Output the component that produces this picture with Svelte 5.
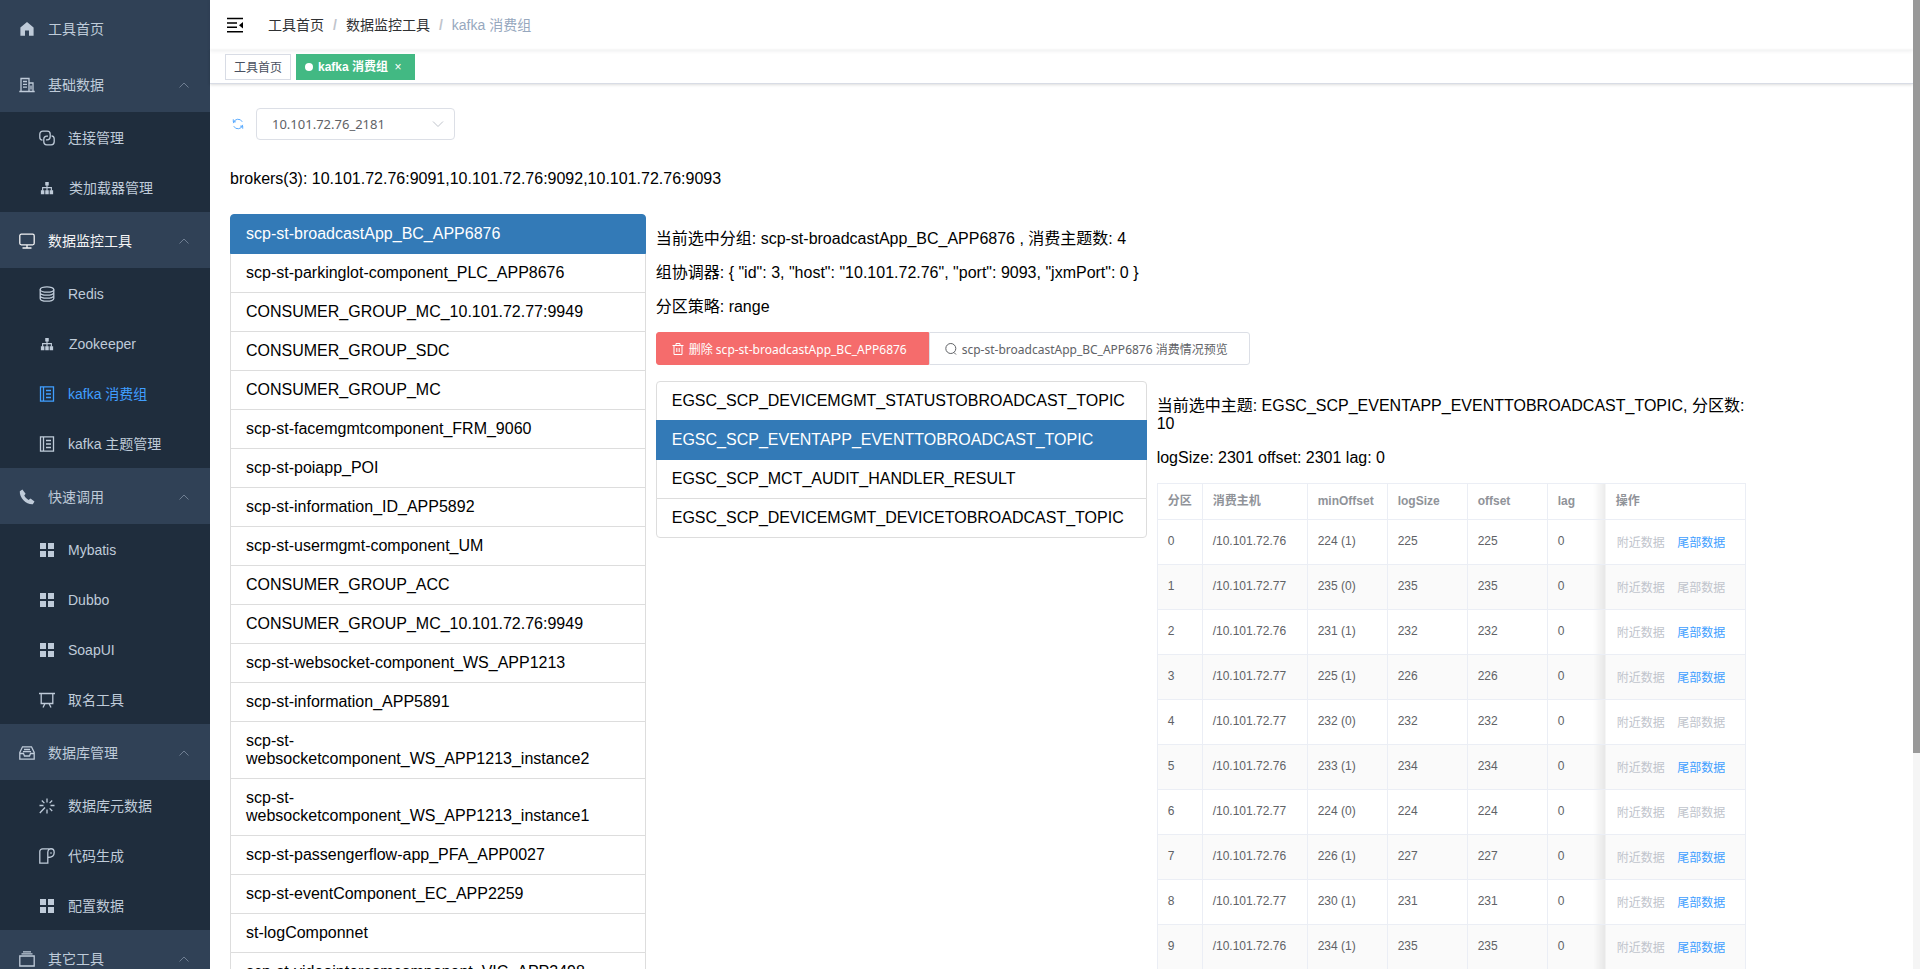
<script lang="ts">
	const menu = [
		{ title: '工具首页', icon: 'home' },
		{
			title: '基础数据',
			icon: 'office',
			children: [
				{ title: '连接管理', icon: 'link' },
				{ title: '类加载器管理', icon: 'tree', wide: true }
			]
		},
		{
			title: '数据监控工具',
			icon: 'monitor',
			open: true,
			children: [
				{ title: 'Redis', icon: 'coin' },
				{ title: 'Zookeeper', icon: 'tree', wide: true },
				{ title: 'kafka 消费组', icon: 'notebook', active: true },
				{ title: 'kafka 主题管理', icon: 'notebook' }
			]
		},
		{
			title: '快速调用',
			icon: 'phone',
			children: [
				{ title: 'Mybatis', icon: 'grid' },
				{ title: 'Dubbo', icon: 'grid' },
				{ title: 'SoapUI', icon: 'grid' },
				{ title: '取名工具', icon: 'board' }
			]
		},
		{
			title: '数据库管理',
			icon: 'inbox',
			children: [
				{ title: '数据库元数据', icon: 'magic' },
				{ title: '代码生成', icon: 'paper' },
				{ title: '配置数据', icon: 'grid' }
			]
		},
		{ title: '其它工具', icon: 'box', children: [] }
	];

	const groups = [
		'scp-st-broadcastApp_BC_APP6876',
		'scp-st-parkinglot-component_PLC_APP8676',
		'CONSUMER_GROUP_MC_10.101.72.77:9949',
		'CONSUMER_GROUP_SDC',
		'CONSUMER_GROUP_MC',
		'scp-st-facemgmtcomponent_FRM_9060',
		'scp-st-poiapp_POI',
		'scp-st-information_ID_APP5892',
		'scp-st-usermgmt-component_UM',
		'CONSUMER_GROUP_ACC',
		'CONSUMER_GROUP_MC_10.101.72.76:9949',
		'scp-st-websocket-component_WS_APP1213',
		'scp-st-information_APP5891',
		'scp-st-websocketcomponent_WS_APP1213_instance2',
		'scp-st-websocketcomponent_WS_APP1213_instance1',
		'scp-st-passengerflow-app_PFA_APP0027',
		'scp-st-eventComponent_EC_APP2259',
		'st-logComponnet',
		'scp-st-videointercomcomponent_VIC_APP3498'
	];

	const topics = [
		'EGSC_SCP_DEVICEMGMT_STATUSTOBROADCAST_TOPIC',
		'EGSC_SCP_EVENTAPP_EVENTTOBROADCAST_TOPIC',
		'EGSC_SCP_MCT_AUDIT_HANDLER_RESULT',
		'EGSC_SCP_DEVICEMGMT_DEVICETOBROADCAST_TOPIC'
	];

	// host, minOffset, logSize
	const partitions: [string, number, number][] = [
		['/10.101.72.76', 224, 225],
		['/10.101.72.77', 235, 235],
		['/10.101.72.76', 231, 232],
		['/10.101.72.77', 225, 226],
		['/10.101.72.77', 232, 232],
		['/10.101.72.76', 233, 234],
		['/10.101.72.77', 224, 224],
		['/10.101.72.76', 226, 227],
		['/10.101.72.77', 230, 231],
		['/10.101.72.76', 234, 235]
	];

	let group = $state(groups[0]);
	let topic = $state(topics[1]);
</script>

{#snippet icon(name: string)}
	<svg class="icon" viewBox="0 0 16 16" aria-hidden="true">
		{#if name === 'home'}
			<path class="solid" d="M8 1 1.4 6.6V14.8H6V9.6h4v5.2h4.6V6.6z" />
		{:else if name === 'office'}
			<path d="M2 14.5V1.5h8v13M10 6h4v8.5M.3 14.5h15.4M4 4.5h4M4 7.3h4M4 10.1h4M12 8.5v4" />
		{:else if name === 'link'}
			<path d="M3.5 10.2A3 3 0 0 1 .8 7.2v-3a3 3 0 0 1 3-3h4.4a3 3 0 0 1 3 3v2.6a3 3 0 0 1-3 3H7" />
			<path d="M12.5 5.8a3 3 0 0 1 2.7 3v3a3 3 0 0 1-3 3H7.8a3 3 0 0 1-3-3V9.2a3 3 0 0 1 3-3H9" />
		{:else if name === 'tree'}
			<path d="M8 4v7M3 11V7.5h10V11" />
			<path class="solid" d="M6 1h4v4H6zM1 10.5h4V15H1zM6 10.5h4V15H6zM11 10.5h4V15h-4z" />
		{:else if name === 'monitor'}
			<rect x=".8" y="1.2" width="14.4" height="10.6" rx="1.5" />
			<path d="M8 12v2.5M3.5 15h9" />
		{:else if name === 'coin'}
			<ellipse cx="8" cy="3.5" rx="6.8" ry="2.7" />
			<path d="M1.2 3.5v9c0 3.6 13.6 3.6 13.6 0v-9M1.2 6.5c0 3.6 13.6 3.6 13.6 0M1.2 9.5c0 3.6 13.6 3.6 13.6 0" />
		{:else if name === 'notebook'}
			<path d="M1.5.8h13v14.4h-13zM4.500.8v14.4M7 4.5h5M7 8h5M7 11.5h5" />
		{:else if name === 'phone'}
			<path class="solid" d="M.8 2.2 3.4.4l3.2 4.300-1.300 1.900c1 2 2.300 3.300 4.300 4.300l1.900-1.300 4 3-1.700 2.700C7.500 15.800.3 9 .8 2.200z" />
		{:else if name === 'grid'}
			<path class="solid" d="M1 1h6v6H1zM9 1h6v6H9zM1 9h6v6H1zM9 9h6v6H9z" />
		{:else if name === 'board'}
			<path d="M0 1.5h16M2.2 1.5v10h11.6v-10M6 11.5l-2 4M10 11.5l2 4" />
		{:else if name === 'inbox'}
			<path d="M.8 7.500 3.500 1.800h9l2.700 5.700v6.700H.8zM.8 8.500h3.700l1 2.500h5l1-2.500h3.700M5 4.500h6M4 6.700h8" />
		{:else if name === 'magic'}
			<path d="M8 .5v4M8 11.500v4M.5 7.500h4M11.500 7.500h4M2.800 2.500l2.600 2.600M13.200 2.500l-2.600 2.600M13.200 13l-2.600-2.600M6 9.500.8 15" />
		{:else if name === 'paper'}
			<path d="M11.500.8h-8A2.700 2.700 0 0 0 .8 3.500v11.700h8V4.500c0-5 6.400-5 6.400 0 0 3.500-2 5-6.400 5" />
			<path d="M12 4.200v1.600" />
		{:else if name === 'box'}
			<path d="M.8 5h14.400v10H.8zM2.500 2.800h11M4 .8h8" />
		{/if}
	</svg>
{/snippet}

<div class="app">
	<nav class="sidebar">
		{#each menu as item}
			<a class="item" class:open={item.open} href="#/">
				{@render icon(item.icon)}
				<span>{item.title}</span>
				{#if item.children}
					<svg class="arrow" viewBox="0 0 12 12" aria-hidden="true"><path d="M1.500 8.500 6 4l4.500 4.500" /></svg>
				{/if}
			</a>
			{#each item.children ?? [] as child}
				<a class="item child" class:active={child.active} class:wide={child.wide} href="#/">
					{@render icon(child.icon)}
					<span>{child.title}</span>
				</a>
			{/each}
		{/each}
	</nav>

	<div class="main">
		<header class="navbar">
			<button class="hamburger" aria-label="Toggle">
				<svg viewBox="0 0 16 16" aria-hidden="true">
					<path d="M0 1.5h16M0 6h10M0 10.3h10M0 14.8h16" />
					<path class="solid" d="M16 5v6.4l-4-3.200z" />
				</svg>
			</button>
			<div class="breadcrumb">
				<a href="#/">工具首页</a><i>/</i><a href="#/">数据监控工具</a><i>/</i><span>kafka 消费组</span>
			</div>
		</header>
		<div class="tags">
			<a class="tag" href="#/">工具首页</a>
			<a class="tag current" href="#/">kafka 消费组<span class="close">×</span></a>
		</div>

		<main>
			<div class="toolbar">
				<button class="refresh" aria-label="Refresh">
					<svg viewBox="0 0 14 14" aria-hidden="true">
						<path d="M1.500 6A5.600 5.600 0 0 1 12 4.500M12.500 8A5.600 5.600 0 0 1 2 9.500M1.500 1.500v3h3M12.500 12.500v-3h-3" />
					</svg>
				</button>
				<div class="select">
					<select aria-label="Zookeeper">
						<option>10.101.72.76_2181</option>
					</select>
					<svg viewBox="0 0 12 12" aria-hidden="true"><path d="M1 3.500 6 8.500l5-5" /></svg>
				</div>
			</div>

			<p class="brokers">brokers(3): 10.101.72.76:9091,10.101.72.76:9092,10.101.72.76:9093</p>

			<div class="columns">
				<div class="list">
					{#each groups as name}
						<button class:selected={name === group} onclick={() => (group = name)}>{name}</button>
					{/each}
				</div>

				<section>
					<p>当前选中分组: {group} , 消费主题数: 4</p>
					<p>组协调器: {'{ "id": 3, "host": "10.101.72.76", "port": 9093, "jxmPort": 0 }'}</p>
					<p>分区策略: range</p>

					<div class="actions">
						<button class="danger">
							<svg viewBox="0 0 12 12" aria-hidden="true">
								<path d="M.5 2.500h11M2 2.500v9h8v-9M4 2.500v-2h4v2M4.800 5v4M7.200 5v4" />
							</svg>
							删除 {group}
						</button>
						<button>
							<svg viewBox="0 0 12 12" aria-hidden="true">
								<circle cx="5.800" cy="5.500" r="5" /><path d="m9 9.500 2 2" />
							</svg>
							{group} 消费情况预览
						</button>
					</div>

					<div class="detail">
						<div class="list">
							{#each topics as name}
								<button class:selected={name === topic} onclick={() => (topic = name)}>{name}</button>
							{/each}
						</div>
						<div>
							<p>当前选中主题: {topic}, 分区数: 10</p>
							<p>logSize: 2301 offset: 2301 lag: 0</p>
							<table>
								<thead>
									<tr>
										<th class="no">分区</th>
										<th class="host">消费主机</th>
										<th class="num">minOffset</th>
										<th class="num">logSize</th>
										<th class="num">offset</th>
										<th class="lag">lag</th>
										<th class="ops">操作</th>
									</tr>
								</thead>
								<tbody>
									{#each partitions as [host, min, size], i}
										<tr>
											<td>{i}</td>
											<td>{host}</td>
											<td>{min} ({size - min})</td>
											<td>{size}</td>
											<td>{size}</td>
											<td class="lag">0</td>
											<td class="ops">
												<button disabled>附近数据</button>
												<button disabled={size === min}>尾部数据</button>
											</td>
										</tr>
									{/each}
								</tbody>
							</table>
						</div>
					</div>
				</section>
			</div>
		</main>
	</div>
	<div class="scrollbar"><div class="thumb"></div></div>
</div>

<style>
	:global(body) {
		margin: 0;
		overflow: hidden;
		font: 16px/18px 'Liberation Sans', 'Noto Sans CJK SC', sans-serif;
		color: #000;
	}
	.app {
		display: flex;
		height: 100vh;
		overflow: hidden;
	}
	a {
		color: inherit;
		text-decoration: none;
	}
	button {
		font: inherit;
		color: inherit;
		cursor: pointer;
	}
	svg {
		fill: none;
		stroke: currentColor;
		flex: none;
	}
	.solid {
		fill: currentColor;
		stroke: none;
	}

	.sidebar {
		flex: 0 0 210px;
		overflow: hidden;
		background: #304156;
	}
	.item {
		display: flex;
		align-items: center;
		height: 56px;
		padding: 1px 20px 0;
		box-sizing: border-box;
		font-size: 14px;
		color: #bfcbd9;
	}
	.open {
		color: #f4f4f5;
	}
	.child {
		height: 50px;
		padding-left: 40px;
		background: #1f2d3d;
	}
	.active {
		color: #409eff;
	}
	.icon {
		width: 16px;
		height: 16px;
		margin: 0 13px 0 -1px;
		stroke-width: 1.3;
	}
	.wide .icon {
		width: 14px;
		height: 14px;
		margin: 0 15px 0 0;
	}
	.arrow {
		width: 12px;
		height: 12px;
		margin-left: auto;
		color: #6f7e92;
	}

	.main {
		flex: 1;
		min-width: 0;
	}
	.navbar {
		display: flex;
		align-items: center;
		height: 50px;
		box-shadow: 0 1px 4px rgba(0, 21, 41, 0.08);
	}
	.hamburger {
		display: flex;
		border: 0;
		padding: 0;
		margin: 0 25px 0 17px;
		background: none;
	}
	.hamburger svg {
		width: 16px;
		height: 16px;
		stroke-width: 1.5;
	}
	.breadcrumb {
		font-size: 14px;
		color: #97a8be;
	}
	.breadcrumb a {
		color: #303133;
	}
	.breadcrumb i {
		margin: 0 9px;
		font-weight: bold;
		font-style: normal;
		color: #c0c4cc;
	}
	.tags {
		display: flex;
		gap: 5px;
		height: 29px;
		padding: 4px 15px 0;
		margin-bottom: 24px;
		border-bottom: 1px solid #d8dce5;
		box-shadow: 0 1px 3px rgba(0, 0, 0, 0.12), 0 0 3px rgba(0, 0, 0, 0.04);
	}
	.tag {
		height: 24px;
		padding: 0 8px;
		border: 1px solid #d8dce5;
		font-size: 12px;
		line-height: 26px;
		color: #495060;
		background: #fff;
	}
	.current {
		display: flex;
		align-items: center;
		border-color: #42b983;
		background: #42b983;
		color: #fff;
		font-weight: bold;
	}
	.current::before {
		content: '';
		width: 8px;
		height: 8px;
		margin-right: 5px;
		border-radius: 50%;
		background: #fff;
	}
	.close {
		width: 16px;
		margin-left: 2px;
		text-align: center;
		font-weight: normal;
	}

	main {
		padding: 0 20px;
	}
	.toolbar {
		display: flex;
		align-items: center;
	}
	.refresh {
		display: flex;
		border: 0;
		padding: 0 2px;
		margin-right: 10px;
		background: none;
		color: #409eff;
	}
	.refresh svg {
		width: 12px;
		height: 12px;
	}
	.select {
		position: relative;
		width: 199px;
	}
	.select select {
		appearance: none;
		width: 100%;
		height: 32px;
		padding: 0 30px 0 15px;
		border: 1px solid #dcdfe6;
		border-radius: 4px;
		background: #fff;
		font: 13px 'Noto Sans', sans-serif;
		color: #606266;
	}
	.select svg {
		position: absolute;
		top: 10px;
		right: 11px;
		width: 12px;
		height: 12px;
		color: #c0c4cc;
	}
	p {
		margin: 16px 0;
	}
	.brokers {
		margin: 30px 0 26px;
	}
	.columns {
		display: grid;
		grid-template-columns: 25% 1fr;
		gap: 10px;
		align-items: start;
	}
	.list {
		display: flex;
		flex-direction: column;
	}
	.list button {
		padding: 10px 15px;
		margin-bottom: -1px;
		border: 1px solid #ddd;
		background: #fff;
		text-align: left;
	}
	.list button:first-child {
		border-radius: 4px 4px 0 0;
	}
	.list button:last-child {
		border-radius: 0 0 4px 4px;
	}
	.list .selected {
		position: relative;
		border-color: #337ab7;
		background: #337ab7;
		color: #fff;
	}
	.actions {
		display: flex;
		margin-bottom: 16px;
	}
	.actions button {
		display: flex;
		align-items: center;
		gap: 5px;
		height: 33px;
		padding: 0 21px 0 15px;
		border: 1px solid #dcdfe6;
		border-radius: 0 3px 3px 0;
		background: #fff;
		color: #606266;
		font: 12px 'Noto Sans', 'Noto Sans CJK SC', sans-serif;
		white-space: nowrap;
	}
	.actions .danger {
		border-color: #f56c6c;
		border-radius: 3px 0 0 3px;
		background: #f56c6c;
		color: #fff;
	}
	.actions svg {
		width: 12px;
		height: 12px;
	}
	.detail {
		display: grid;
		grid-template-columns: 5fr 6fr;
		gap: 10px;
		align-items: start;
		width: 88.1%;
	}

	table {
		width: 100%;
		table-layout: fixed;
		border-collapse: collapse;
		font-size: 12px;
		color: #606266;
	}
	th,
	td {
		height: 42px;
		padding: 0 0 2px 10px;
		border: 1px solid #ebeef5;
		text-align: left;
		white-space: nowrap;
	}
	th {
		height: 33px;
		color: #909399;
	}
	.no {
		width: 34px;
	}
	.host {
		width: 94px;
	}
	.num {
		width: 69px;
	}
	th.ops {
		width: 129px;
	}
	tbody tr:nth-child(even) {
		background: #fafafa;
	}
	.lag {
		border-right: 0;
		background: linear-gradient(to left, rgba(0, 0, 0, 0.08), transparent 12px);
	}
	.ops {
		border-left: 0;
	}
	td.ops {
		padding: 2px 0 0 11px;
	}
	td button {
		padding: 0;
		margin-right: 9px;
		border: 0;
		background: none;
		color: #409eff;
	}
	td button:disabled {
		color: #c0c4cc;
	}

	.scrollbar {
		flex: 0 0 7px;
		background: #f5f5f5;
	}
	.thumb {
		height: 77.7%;
		background: #999;
	}
</style>
